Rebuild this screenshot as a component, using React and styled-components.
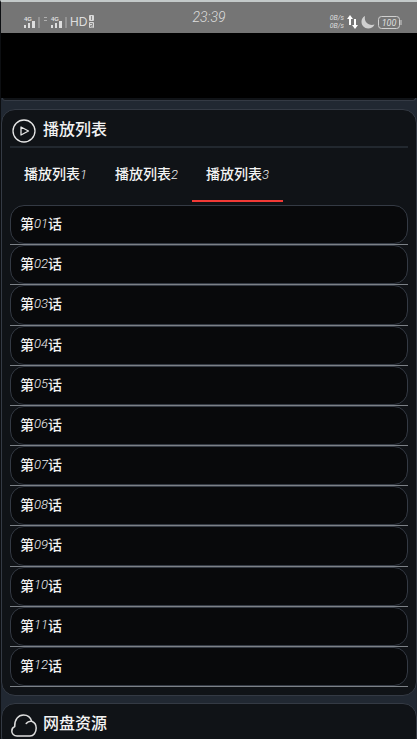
import React, { useState } from 'react';
import styled, { createGlobalStyle } from 'styled-components';

const GlobalStyle = createGlobalStyle`
  * {
    box-sizing: border-box;
  }
  body {
    margin: 0;
    background: #212832;
    color: #f4f4f4;
    font-family: "Liberation Sans", "Noto Sans CJK SC", sans-serif;
    font-size: 14px;
    overflow: hidden;
  }
`;

const Screen = styled.div`
  border-top: 2px solid #c3c9c9;
  border-left: 1px solid #0c0e11;
  height: 100vh;
  overflow: hidden;
`;

// Phone status bar
const StatusBar = styled.header`
  display: grid;
  grid-template-columns: 1fr auto 1fr;
  height: 31px;
  padding: 0 15px 0 22px;
  background: #757575;
  color: #dedede;
`;

const StatusGroup = styled.div`
  display: flex;
  align-items: center;
  justify-content: ${props => props.$end ? 'flex-end' : 'flex-start'};
  gap: ${props => props.$end ? '3px' : '2px'};
  padding-top: 9px;
`;

const Clock = styled.time`
  padding-right: 7px;
  font: italic 300 14px/31px Roboto, sans-serif;
`;

const NetworkType = styled.span`
  font-size: 12px;
  line-height: 14px;
`;

const Speed = styled.span`
  display: grid;
  font: italic 400 7px/8px Roboto, sans-serif;
`;

const Video = styled.div`
  height: 65px;
  background: #000;
`;

// Lower edge of the card that is scrolled under the video
const CardEdge = styled.div`
  height: 3px;
  margin: 0 1px 8px;
  border: 1px solid #343a44;
  border-top: 0;
  border-radius: 0 0 12px 12px;
  background: #101317;
`;

const Card = styled.section`
  margin: 7px 0;
  padding: 0 8px 8px;
  border: 1px solid #343a44;
  border-radius: 14px;
  background: #101317;
`;

const CardHeader = styled.div`
  display: flex;
  align-items: center;
  gap: 6px;
  height: 38px;
  padding: 6px 0 0 1px;
  border-bottom: 2px solid #22282f;
`;

const Title = styled.h2`
  margin: 0;
  padding-bottom: 2px;
  font-size: 16px;
  font-weight: 500;
  line-height: 24px;
`;

const Tabs = styled.div`
  display: flex;
  height: 54px;
`;

const Tab = styled.button`
  padding: 0 14px 2px;
  border: 0;
  border-bottom: 2px solid ${props => props.$active ? '#f23a36' : 'transparent'};
  background: none;
  color: inherit;
  font: inherit;
  font-weight: 500;
  white-space: nowrap;
  cursor: pointer;
`;

const Digits = styled.span`
  color: #f0f0f0;
  font-family: Roboto, sans-serif;
  font-size: 13px;
  font-style: italic;
  font-weight: 300;
`;

const EpisodeList = styled.ul`
  display: grid;
  grid-auto-rows: 1fr;
  min-height: 482px;
  margin: 3px 0 0;
  padding: 0;
  list-style: none;
`;

const EpisodeItem = styled.li`
  display: flex;
  border-bottom: 1px solid #7c8187;
`;

const Episode = styled.a`
  display: flex;
  flex: 1;
  align-items: center;
  padding: 0 9px 3px;
  border: 1px solid #343a44;
  border-radius: 14px;
  background: #08090b;
  color: inherit;
  font-weight: 500;
  text-decoration: none;
`;

const Signal = () => (
  <svg width="18" height="12" viewBox="0 0 18 12" fill="#dedede">
    <text x="1" y="5" fontSize="6" fontWeight="700">4G</text>
    <path d="M1 9h2v3H1zM5 7h2v5H5zM9 5h3v7H9z" />
    <path d="M15 1h2v11h-2z" fill="#939393" />
  </svg>
);

const Equals = () => (
  <svg width="5" height="12" viewBox="0 0 5 12" fill="#b0b0b0">
    <path d="M1 1h3v1H1zM1 4h3v1H1z" />
  </svg>
);

const SimSlots = () => (
  <svg width="6" height="14" viewBox="0 0 6 14">
    <rect width="5" height="6" rx="1" fill="#d8d8d8" />
    <rect y="7" width="5" height="6" rx="1" fill="#d8d8d8" />
    <path d="M2.500 1v4M1 8.500h2.500v2H1.500v1.500h2.500" fill="none" stroke="#757575" strokeWidth=".8" />
  </svg>
);

const Arrows = () => (
  <svg width="11" height="14" viewBox="0 0 11 14" fill="#fff">
    <path d="M3 0l3 4H4v6H2V4H0zM8 14l-3-4h2V4h2v6h2z" />
  </svg>
);

const Moon = () => (
  <svg width="14" height="14" viewBox="0 0 14 14" fill="#d0d0d0">
    <path d="M4 1C1.500 2.300.5 4.400.5 6.800c0 3.800 2.900 6.700 6.600 6.700 3 0 5.300-1.500 6.400-4C8.500 11.200 2.600 7.700 4 1z" />
  </svg>
);

const Battery = () => (
  <svg width="24" height="13" viewBox="0 0 24 13" fill="none" stroke="#d0d0d0">
    <rect x=".5" y=".5" width="21" height="12" rx="3" />
    <path d="M23 4v5" />
    <text x="11" y="10" fill="#dedede" stroke="none" textAnchor="middle" fontFamily="Roboto" fontSize="9" fontStyle="italic">100</text>
  </svg>
);

const PlayCircle = () => (
  <svg width="26" height="26" viewBox="0 0 26 26" fill="none" stroke="#e6e6e6" strokeWidth="1.300" strokeLinejoin="round">
    <circle cx="13" cy="13" r="11" />
    <path d="M10 9v8l7.500-4z" />
  </svg>
);

const Cloud = () => (
  <svg width="26" height="26" viewBox="0 0 26 26" fill="none" stroke="#dedede" strokeWidth="1.500" strokeLinecap="round">
    <path d="M6 24C2.800 24 .8 21.700.8 19.200c0-2.400 1.300-4 2.900-4.700C3.500 7.500 7.300 3 12.500 3c4 0 7.100 2.400 8.200 6.300 3 1.200 4.500 3.600 4.500 6.800 0 4.500-2.600 7.900-6.200 7.900zM20.700 9.300c-2.200-.3-4.200.5-5.500 2.200" />
  </svg>
);

const playlists = [1, 2, 3];
const episodes = Array.from({ length: 12 }, (_, i) => String(i + 1).padStart(2, '0'));

const App = () => {
  const [active, setActive] = useState(3);

  return (
    <Screen>
      <GlobalStyle />
      <StatusBar>
        <StatusGroup>
          <Signal />
          <Equals />
          <Signal />
          <NetworkType>HD</NetworkType>
          <SimSlots />
        </StatusGroup>
        <Clock>23:39</Clock>
        <StatusGroup $end>
          <Speed>
            <span>0B/s</span>
            <span>0B/s</span>
          </Speed>
          <Arrows />
          <Moon />
          <Battery />
        </StatusGroup>
      </StatusBar>
      <Video />
      <CardEdge />
      <Card>
        <CardHeader>
          <PlayCircle />
          <Title>播放列表</Title>
        </CardHeader>
        <Tabs role="tablist">
          {playlists.map(n => (
            <Tab key={n} role="tab" aria-selected={n === active} $active={n === active} onClick={() => setActive(n)}>
              播放列表<Digits>{n}</Digits>
            </Tab>
          ))}
        </Tabs>
        <EpisodeList>
          {episodes.map(n => (
            <EpisodeItem key={n}>
              <Episode href={`#${n}`}>第<Digits>{n}</Digits>话</Episode>
            </EpisodeItem>
          ))}
        </EpisodeList>
      </Card>
      <Card>
        <CardHeader>
          <Cloud />
          <Title>网盘资源</Title>
        </CardHeader>
      </Card>
    </Screen>
  );
};

export default App;
